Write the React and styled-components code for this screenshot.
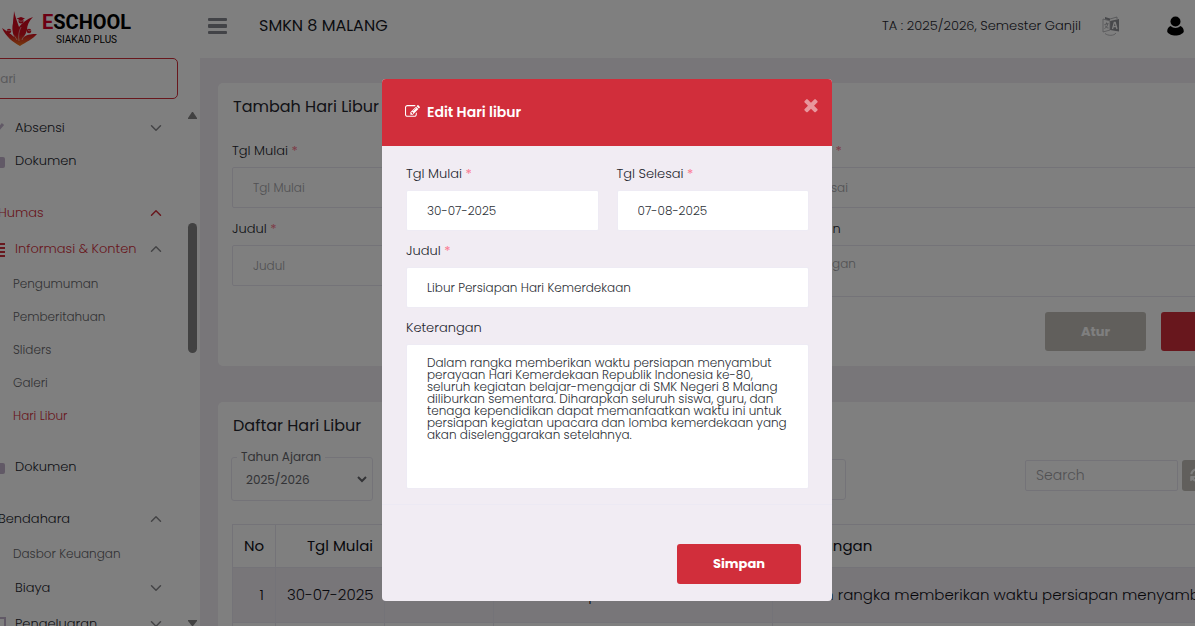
import React from "react"
import styled, { createGlobalStyle } from "styled-components"
import { FaSyncAlt } from "react-icons/fa"
import { ChevronDown, ChevronUp } from "lucide-react"

const GlobalStyle = createGlobalStyle`
  *,
  *::before,
  *::after {
    box-sizing: border-box;
  }

  :root {
    --red: #d12e3b;
    --canvas: #f1ecf3;
    --line: #e9e7f1;
    --txt: #24262e;
    --grey: #c2bfb9;
  }

  body {
    margin: 0;
    overflow: hidden;
    background: #fff;
    color: var(--txt);
    font-family: Poppins, Inter, sans-serif;
    font-size: 13px;
    font-weight: 300;
    line-height: 20px;
  }

  h1, h2, p {
    margin: 0;
  }

  h1, h2 {
    font-weight: 400;
  }

  button, input, select, textarea {
    font: inherit;
    color: inherit;
  }

  a {
    color: inherit;
    text-decoration: none;
  }
`

const Page = styled.div`
  display: flex;
  height: 100vh;
  overflow: hidden;
`

/* sidebar */

const Sidebar = styled.aside`
  flex: 0 0 200px;
  display: flex;
  flex-direction: column;
  align-items: flex-end;
  overflow: hidden;
  background: #fff;
`

const Logo = styled.a`
  display: flex;
  align-items: center;
  flex: 0 0 58px;
  width: 200px;
  padding-left: 2px;
  gap: 4px;
`

const LogoText = styled.span`
  display: flex;
  flex-direction: column;
  align-items: center;
  font-family: "Liberation Sans Narrow", Roboto, sans-serif;
  color: #000;
  padding-bottom: 2px;

  b {
    font-size: 20px;
    font-weight: 700;
    line-height: 24px;
  }

  b span {
    color: #d80027;
  }

  small {
    font-size: 10px;
    font-weight: 400;
    line-height: 12px;
  }
`

const SearchMenu = styled.input`
  flex: 0 0 41px;
  width: 214px;
  margin-right: 22px;
  padding: 0 26px;
  border: 1px solid var(--red);
  border-radius: 5px;
  background: transparent;
  font-size: 12px;
  font-weight: 400;
  outline: none;

  &::placeholder {
    color: #b4b4b8;
    opacity: 1;
  }
`

const MenuArea = styled.div`
  flex: 1;
  display: flex;
  min-height: 0;
  width: 236px;
  padding-top: 12px;
`

const Menu = styled.nav`
  flex: 1;
  display: flex;
  flex-direction: column;
  gap: 18px;
  overflow: hidden;
`

const MenuGroup = styled.div`
  display: flex;
  flex-direction: column;
  flex-shrink: 0;
`

const MenuLink = styled.a`
  display: flex;
  align-items: center;
  height: ${(p) => (p.$tall ? "36px" : "33px")};
  padding-left: ${(p) => (p.$level === 0 ? "34px" : "26px")};
  padding-right: 20px;
  color: ${(p) => (p.$active ? "var(--red)" : "var(--txt)")};

  span {
    flex: 1;
  }

  & > svg:first-child {
    margin-right: 9px;
    color: ${(p) => (p.$active ? "var(--red)" : "#c3b3cc")};
  }

  & > svg:last-child {
    color: ${(p) => (p.$active && p.$level === 0 ? "var(--red)" : "#88888c")};
  }
`

const SubLink = styled.a`
  display: flex;
  align-items: center;
  height: 33px;
  padding-left: 49px;
  font-size: 12px;
  color: ${(p) => (p.$active ? "var(--red)" : "#66666a")};
`

const ScrollTrack = styled.div`
  flex: 0 0 15px;
  display: flex;
  flex-direction: column;
  align-items: center;
  color: #848484;
`

const ScrollThumb = styled.div`
  width: 9px;
  height: 130px;
  margin: 103px 0 auto;
  border-radius: 5px;
  background: #848484;
`

/* main column */

const Content = styled.div`
  flex: 1;
  min-width: 0;
  display: flex;
  flex-direction: column;
  background: var(--canvas);
`

const TopBar = styled.header`
  flex: 0 0 58px;
  display: flex;
  align-items: center;
  padding: 0 11px 6px 8px;
  background: #fff;

  h1 {
    margin: 0 auto 0 32px;
    font-size: 16px;
    color: #17181f;
  }
`

const IconButton = styled.button`
  display: flex;
  padding: 0;
  border: 0;
  background: none;
`

const LanguageButton = styled(IconButton)`
  margin: 0 47px 0 21px;
`

const Main = styled.main`
  display: flex;
  flex-direction: column;
  gap: 36px;
  margin-right: -98px;
  padding: 25px 0 0 18px;
`

const Card = styled.section`
  padding: 12px 15px 15px 14px;
  border-radius: 5px;
  background: #fff;

  h2 {
    padding-left: 1px;
    font-size: 16px;
    line-height: 24px;
  }
`

const CardForm = styled.form`
  margin-top: 22px;
`

const FormGrid = styled.div`
  display: grid;
  grid-template-columns: 1fr 1fr;
  gap: ${(p) => p.$gap};
`

const FieldBox = styled.div`
  display: flex;
  flex-direction: column;
  gap: 6px;
  grid-column: ${(p) => (p.$wide ? "1 / -1" : "auto")};
`

const Label = styled.label`
  span {
    color: #fb7b92;
    font-weight: 400;
  }
`

const Input = styled.input`
  width: 100%;
  height: 41px;
  padding: 0 20px;
  border: 1px solid var(--line);
  border-radius: 2px;
  background: #fff;
  color: #2d3137;
  font-size: 12px;
  outline: none;

  &::placeholder {
    color: #a3a3a7;
    opacity: 1;
  }
`

const TextArea = styled(Input).attrs({ as: "textarea" })`
  display: block;
  height: ${(p) => p.$height};
  padding: 12px 20px;
  line-height: 12px;
  resize: none;
  overflow: hidden;
`

const Button = styled.button`
  height: ${(p) => p.$height || "39px"};
  width: ${(p) => p.$width};
  border: 0;
  border-radius: 3px;
  background: ${(p) => (p.$grey ? "var(--grey)" : "var(--red)")};
  color: #fff;
  font-weight: 700;
`

const ButtonRow = styled.div`
  display: flex;
  justify-content: flex-end;
  gap: 15px;
  margin-top: 15px;
`

const Toolbar = styled.div`
  display: flex;
  align-items: center;
  gap: 4px;
  margin: 11px 0 23px;
`

const YearFilter = styled.fieldset`
  width: 142px;
  height: 52px;
  margin: 0 auto 0 -1px;
  padding: 0 2px 0 10px;
  border: 1px solid var(--line);
  border-radius: 3px;
  font-size: 12px;
  font-weight: 400;
  color: #66676d;

  legend {
    padding: 0 4px;
    margin-left: -5px;
    line-height: 16px;
  }

  select {
    width: 100%;
    height: 28px;
    border: 0;
    background: transparent;
    outline: none;
  }
`

const MonthFilter = styled.select`
  width: 300px;
  height: 41px;
  margin: 8px 175px 0 0;
  border: 1px solid var(--line);
  border-radius: 3px;
  background: #fff;
  appearance: none;
`

const SearchBox = styled(Input)`
  width: 153px;
  height: 31px;
  padding: 0 10px;
  font-size: 14px;
`

const RefreshButton = styled(Button)`
  display: flex;
  align-items: center;
  padding: 0 8px;
`

const Table = styled.table`
  width: 100%;
  table-layout: fixed;
  border-collapse: collapse;
  font-size: 15px;
  color: #101118;

  th,
  td {
    padding: 0 11px;
    border: 1px solid var(--line);
    font-weight: 300;
    text-align: left;
    white-space: nowrap;
  }

  th {
    height: 43px;
    font-weight: 400;
  }

  td {
    height: 55px;
  }

  tbody tr:nth-child(odd) {
    background: var(--canvas);
  }

  .num {
    text-align: right;
  }
`

/* modal */

const Backdrop = styled.div`
  position: fixed;
  inset: 0;
  display: flex;
  justify-content: center;
  align-items: flex-start;
  padding: 79px 0 0 19px;
  background: rgba(0, 0, 0, 0.5);
`

const Dialog = styled.div`
  --line: #eeebf4;
  width: 450px;
  border-radius: 4px;
  overflow: hidden;
  background: var(--canvas);
`

const DialogHeader = styled.div`
  display: flex;
  align-items: center;
  height: 67px;
  padding: 0 14px 2px 23px;
  background: var(--red);
  color: #fff;

  h2 {
    flex: 1;
    margin-left: 7px;
    font-size: 14px;
    font-weight: 600;
  }
`

const CloseButton = styled(IconButton)`
  align-self: flex-start;
  margin-top: 16px;
  color: #fff;
  opacity: 0.5;
`

const DialogBody = styled.div`
  padding: 18px 23px 15px 24px;
`

const DialogFooter = styled.div`
  display: flex;
  justify-content: flex-end;
  padding: 39px 31px 17px;
  border-top: 1px solid #ece9f3;
`

function LogoMark() {
  return (
    <svg width="36" height="36" viewBox="0 0 36 36" aria-hidden="true">
      <defs>
        <linearGradient id="flame" x1="0" y1="0" x2="0" y2="36" gradientUnits="userSpaceOnUse">
          <stop offset="0" stopColor="#d5001f" />
          <stop offset="0.65" stopColor="#d5101f" />
          <stop offset="1" stopColor="#f0801c" />
        </linearGradient>
      </defs>
      <g fill="url(#flame)">
        <path d="M12 0C13 5 15 10 17 16C20 12 25 8 31 6C27 10 25 14 25 19C24 22 23 24 22 26C26 23 30 23 35 23C31 28 24 31 18 35C11 31 4 26 0 17C4 20 8 22 12 26C10 20 10 16 11 12C11 8 12 4 12 0Z" />
        <circle cx="19" cy="10" r="2.500" />
        <circle cx="7" cy="20" r="2.300" />
        <circle cx="27" cy="20" r="2.300" />
        <path d="M14.500 7.500L19 6L23 7.500L19 9.500Z" />
      </g>
      <g fill="none" stroke="#fff" strokeWidth="0.500">
        <path d="M17 30C16 25 17 20 19 16" />
        <path d="M15 29C14 27 12 24 9 22" />
        <path d="M20 29C21 26 22 25 25 23" />
        <path d="M17 9.500C18 10.500 20 10.500 21 9.500" />
        <path d="M26 19C27 20 28 20 29 19M5 19C6 20 8 20 9 19" />
      </g>
    </svg>
  )
}

function BarsIcon() {
  return (
    <svg width="19" height="17" viewBox="0 0 19 17" fill="#85868e" aria-hidden="true">
      <rect width="19" height="3" rx="1" />
      <rect y="6" width="19" height="4" rx="1" />
      <rect y="13" width="19" height="3" rx="1" />
    </svg>
  )
}

function TranslateIcon() {
  return (
    <svg width="18" height="20" viewBox="0 0 18 20" aria-hidden="true">
      <path d="M8 5L17 3V15.500L8 14Z" fill="#8f9096" />
      <path d="M10.500 13L12.300 6.500H13.200L15 13M11.200 10.700H14.300" fill="none" stroke="#fff" strokeWidth="1.300" />
      <path d="M8 5L1 3V16L8 14Z" fill="none" stroke="#a9aaae" strokeWidth="0.800" />
      <path d="M2.500 8.500L6.500 7.500M4.500 6.500V8M5.800 8C5.500 10 4 12 2.500 12.500M3.200 9.500C4 11 5 12 6.500 12" fill="none" stroke="#a0a1a6" strokeWidth="0.900" />
      <path d="M3 1L8 2.500V4.500L3 3.200Z" fill="#8f9096" />
      <path d="M8 3L15 1V3" fill="none" stroke="#a0a1a6" strokeWidth="0.800" />
      <path d="M3 17.500C6 20 12 20 14 17" fill="none" stroke="#a9aaae" strokeWidth="0.800" />
    </svg>
  )
}

function UserIcon() {
  return (
    <svg width="17" height="20" viewBox="0 0 17 20" aria-hidden="true">
      <circle cx="8.500" cy="5.500" r="5" />
      <path d="M3.500 10C6.500 12.500 10.500 12.500 13.500 10C15.800 11 16.800 13 16.800 15.500C16 18 12 19.500 8.500 19.500S1 18 0.200 15.500C0.200 13 1.200 11 3.500 10Z" />
    </svg>
  )
}

function EditIcon() {
  return (
    <svg width="15" height="15" viewBox="0 0 1792 1792" fill="currentColor" aria-hidden="true">
      <path d="M888 1184l116-116-152-152-116 116v56h96v96h56zm440-720q-16-16-33 1l-350 350q-17 17-1 33t33-1l350-350q17-17 1-33zm80 594v190q0 119-84.500 203.500t-203.500 84.500h-832q-119 0-203.500-84.500t-84.500-203.500v-832q0-119 84.500-203.500t203.500-84.500h832q63 0 117 25 15 7 18 23 3 17-9 29l-49 49q-14 14-32 8-23-6-45-6h-832q-66 0-113 47t-47 113v832q0 66 47 113t113 47h832q66 0 113-47t47-113v-126q0-13 9-22l64-64q15-15 35-7t20 29zm-96-738l288 288-672 672h-288v-288zm444 132l-92 92-288-288 92-92q28-28 68-28t68 28l152 152q28 28 28 68t-28 68z" />
    </svg>
  )
}

function TimesIcon() {
  return (
    <svg width="14" height="20" viewBox="110 0 1188 1792" fill="currentColor" aria-hidden="true">
      <path d="M1298 1322q0 40-28 68l-136 136q-28 28-68 28t-68-28l-294-294-294 294q-28 28-68 28t-68-28l-136-136q-28-28-28-68t28-68l294-294-294-294q-28-28-28-68t28-68l136-136q28-28 68-28t68 28l294 294 294-294q28-28 68-28t68 28l136 136q28 28 28 68t-28 68l-294 294 294 294q28 28 28 68z" />
    </svg>
  )
}

const menuShapes = {
  check: <path d="M3 7L7 11L13 4" fill="none" stroke="currentColor" strokeWidth="3" />,
  folder: <rect x="2" y="4" width="13" height="11" rx="2" fill="currentColor" />,
  list: (
    <path d="M2 3H15M2 7H15M2 11H15M2 15H15" fill="none" stroke="currentColor" strokeWidth="2" />
  ),
  sheet: <rect x="3" y="2" width="12" height="12" fill="none" stroke="currentColor" strokeWidth="2" />,
}

function MenuIcon({ name }) {
  return (
    <svg width="16" height="16" viewBox="0 0 16 16" aria-hidden="true">
      {menuShapes[name]}
    </svg>
  )
}

const menu = [
  [
    { text: "Absensi", icon: "check", arrow: "down" },
    { text: "Dokumen", icon: "folder" },
  ],
  [
    { text: "Humas", level: 0, arrow: "up", active: true, tall: true },
    { text: "Informasi & Konten", icon: "list", arrow: "up", active: true, tall: true },
    { text: "Pengumuman", sub: true },
    { text: "Pemberitahuan", sub: true },
    { text: "Sliders", sub: true },
    { text: "Galeri", sub: true },
    { text: "Hari Libur", sub: true, active: true },
  ],
  [{ text: "Dokumen", icon: "folder" }],
  [
    { text: "Bendahara", level: 0, arrow: "up", tall: true },
    { text: "Dasbor Keuangan", sub: true },
    { text: "Biaya", icon: "none", arrow: "down", tall: true },
    { text: "Pengeluaran", icon: "sheet", arrow: "down", tall: true },
  ],
]

function MenuEntry({ item }) {
  if (item.sub) {
    return (
      <SubLink href="#" $active={item.active}>
        {item.text}
      </SubLink>
    )
  }
  return (
    <MenuLink href="#" $level={item.level} $active={item.active} $tall={item.tall}>
      {item.icon && <MenuIcon name={item.icon} />}
      <span>{item.text}</span>
      {item.arrow === "up" && <ChevronUp size={18} strokeWidth={2} />}
      {item.arrow === "down" && <ChevronDown size={18} strokeWidth={2} />}
    </MenuLink>
  )
}

function Field({ id, label, required, wide, children }) {
  return (
    <FieldBox $wide={wide}>
      <Label htmlFor={id}>
        {label} {required && <span>*</span>}
      </Label>
      {children}
    </FieldBox>
  )
}

const description =
  "Dalam rangka memberikan waktu persiapan menyambut perayaan Hari Kemerdekaan Republik Indonesia ke-80, seluruh kegiatan belajar-mengajar di SMK Negeri 8 Malang diliburkan sementara. Diharapkan seluruh siswa, guru, dan tenaga kependidikan dapat memanfaatkan waktu ini untuk persiapan kegiatan upacara dan lomba kemerdekaan yang akan diselenggarakan setelahnya."

export default function App() {
  return (
    <>
      <GlobalStyle />
      <Page>
        <Sidebar>
          <Logo href="#">
            <LogoMark />
            <LogoText>
              <b>
                <span>E</span>SCHOOL
              </b>
              <small>SIAKAD PLUS</small>
            </LogoText>
          </Logo>
          <SearchMenu aria-label="Cari" placeholder="Cari" />
          <MenuArea>
            <Menu>
              {menu.map((group, i) => (
                <MenuGroup key={i}>
                  {group.map((item) => (
                    <MenuEntry key={item.text} item={item} />
                  ))}
                </MenuGroup>
              ))}
            </Menu>
            <ScrollTrack>
              <svg width="9" height="9" viewBox="0 0 9 9" fill="currentColor" aria-hidden="true">
                <path d="M4 1H5L9 7V8H0V7Z" />
              </svg>
              <ScrollThumb />
              <svg width="9" height="6" viewBox="0 0 9 6" fill="currentColor" aria-hidden="true">
                <path d="M0 0H9V1L5 6H4L0 1Z" />
              </svg>
            </ScrollTrack>
          </MenuArea>
        </Sidebar>

        <Content>
          <TopBar>
            <IconButton aria-label="Menu">
              <BarsIcon />
            </IconButton>
            <h1>SMKN 8 MALANG</h1>
            <p>TA : 2025/2026, Semester Ganjil</p>
            <LanguageButton aria-label="Bahasa">
              <TranslateIcon />
            </LanguageButton>
            <IconButton aria-label="Akun">
              <UserIcon />
            </IconButton>
          </TopBar>

          <Main>
            <Card>
              <h2>Tambah Hari Libur</h2>
              <CardForm>
                <FormGrid $gap="11px 20px">
                  <Field id="add-start" label="Tgl Mulai" required>
                    <Input id="add-start" placeholder="Tgl Mulai" />
                  </Field>
                  <Field id="add-end" label="Tgl Selesai" required>
                    <Input id="add-end" placeholder="Tgl Selesai" />
                  </Field>
                  <Field id="add-title" label="Judul" required>
                    <Input id="add-title" placeholder="Judul" />
                  </Field>
                  <Field id="add-note" label="Keterangan">
                    <TextArea id="add-note" placeholder="Keterangan" $height="52px" />
                  </Field>
                </FormGrid>
                <ButtonRow>
                  <Button type="button" $grey $width="101px">
                    Atur
                  </Button>
                  <Button type="button" $width="117px" aria-label="Simpan" />
                </ButtonRow>
              </CardForm>
            </Card>

            <Card>
              <h2>Daftar Hari Libur</h2>
              <Toolbar>
                <YearFilter>
                  <legend>Tahun Ajaran</legend>
                  <select aria-label="Tahun Ajaran">
                    <option>2025/2026</option>
                  </select>
                </YearFilter>
                <MonthFilter aria-label="Bulan" />
                <SearchBox aria-label="Search" placeholder="Search" />
                <RefreshButton $grey $width="96px" $height="31px" aria-label="Refresh">
                  <FaSyncAlt size={14} />
                </RefreshButton>
              </Toolbar>
              <Table>
                <colgroup>
                  <col width="43" />
                  <col width="109" />
                  <col width="109" />
                  <col width="279" />
                  <col />
                </colgroup>
                <thead>
                  <tr>
                    <th className="num">No</th>
                    <th className="num">Tgl Mulai</th>
                    <th className="num">Tgl Selesai</th>
                    <th>Judul</th>
                    <th>Keterangan</th>
                  </tr>
                </thead>
                <tbody>
                  <tr>
                    <td className="num">1</td>
                    <td className="num">30-07-2025</td>
                    <td className="num">07-08-2025</td>
                    <td>Libur Persiapan Hari Kemerdekaan</td>
                    <td>{description}</td>
                  </tr>
                  <tr>
                    <td />
                    <td />
                    <td />
                    <td />
                    <td />
                  </tr>
                </tbody>
              </Table>
            </Card>
          </Main>
        </Content>
      </Page>

      <Backdrop>
        <Dialog role="dialog" aria-labelledby="edit-heading">
          <DialogHeader>
            <EditIcon />
            <h2 id="edit-heading">Edit Hari libur</h2>
            <CloseButton aria-label="Tutup">
              <TimesIcon />
            </CloseButton>
          </DialogHeader>
          <DialogBody>
            <FormGrid $gap="10px 18px">
              <Field id="edit-start" label="Tgl Mulai" required>
                <Input id="edit-start" defaultValue="30-07-2025" />
              </Field>
              <Field id="edit-end" label="Tgl Selesai" required>
                <Input id="edit-end" defaultValue="07-08-2025" />
              </Field>
              <Field id="edit-title" label="Judul" required wide>
                <Input id="edit-title" defaultValue="Libur Persiapan Hari Kemerdekaan" />
              </Field>
              <Field id="edit-note" label="Keterangan" wide>
                <TextArea id="edit-note" defaultValue={description} $height="145px" />
              </Field>
            </FormGrid>
          </DialogBody>
          <DialogFooter>
            <Button type="button" $width="124px" $height="40px">
              Simpan
            </Button>
          </DialogFooter>
        </Dialog>
      </Backdrop>
    </>
  )
}
